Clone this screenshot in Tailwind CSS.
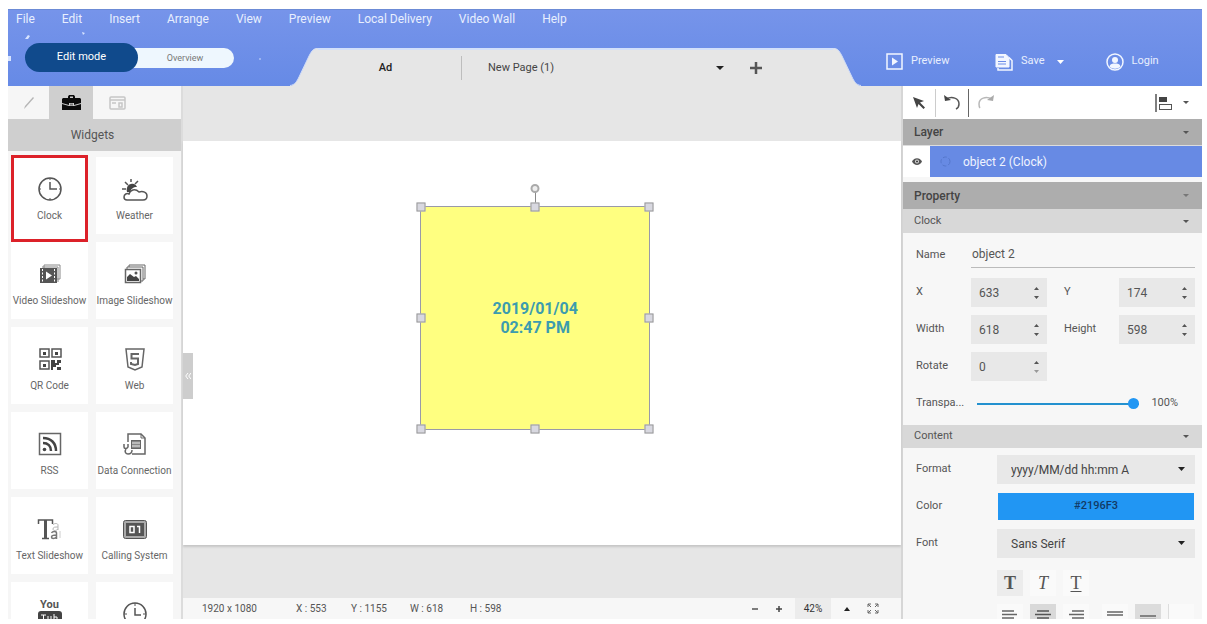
<!DOCTYPE html>
<html lang="en">
  <head>
    <meta charset="UTF-8" />
    <meta name="viewport" content="width=device-width, initial-scale=1.0" />
    <title>Signage Editor</title>
    <script src="https://cdn.jsdelivr.net/npm/@tailwindcss/browser@4"></script>
  </head>
  <body class="bg-white font-[Roboto,sans-serif] text-xs text-[#555]">
    <div class="flex h-screen flex-col overflow-hidden pt-[9px] pr-[5px] pb-[5px] pl-2">
      <!-- Header -->
      <header class="relative flex h-[77px] shrink-0 flex-col border-t border-[#6c8bd6] bg-linear-to-b from-[#7694ea] to-[#668ae6] text-[#e8effe]">
        <svg class="absolute top-0 left-0" width="260" height="76" fill="#d7e4ff">
          <path d="M17 29l3-4 2 1-2 3zM74 22l3 1-2 2zM0 46h3v5H0z" />
          <circle cx="252" cy="49" r="1" opacity=".6" />
        </svg>
        <nav class="flex h-8 gap-[27px] pl-2 leading-[18px]">
          <a href="#">File</a>
          <a href="#">Edit</a>
          <a href="#">Insert</a>
          <a href="#">Arrange</a>
          <a href="#">View</a>
          <a href="#">Preview</a>
          <a href="#">Local Delivery</a>
          <a href="#">Video Wall</a>
          <a href="#">Help</a>
        </nav>
        <div class="flex flex-1 items-end">
          <div class="flex w-[282px] shrink-0 items-center self-start pt-px pl-[17px]">
            <button class="z-10 h-[29px] w-[113px] rounded-full bg-[#104a8c] text-[11px] text-white">Edit mode</button>
            <button class="-ml-3 h-5 w-[108px] rounded-r-full bg-[#eef7fe] pl-2.5 text-[9px] text-[#777]">Overview</button>
          </div>
          <svg class="shrink-0" width="28" height="38" viewBox="0 0 28 38">
            <path d="M0 38C5 37 7 33 9 29L19 8C22 2 24 0 28 0V38z" fill="#e6e6e6" />
            <path d="M0 37.500C5 37 7 33 9 29L19 8C22 2 24 .5 28 .5" fill="none" stroke="#cfdcf8" />
          </svg>
          <div class="flex h-[38px] flex-1 items-center border-t-2 border-[#d3e0fa] bg-[#e6e6e6] text-[11px] text-[#444]">
            <button class="w-[143px] pr-2 font-medium text-[#222]">Ad</button>
            <span class="h-6 w-px bg-[#bdbdbd]"></span>
            <button class="flex-1 pl-[26px] text-left">New Page (1)</button>
            <button class="px-3" aria-label="Page list">
              <svg width="8" height="4"><path d="M0 0h8L4 4z" fill="#222" /></svg>
            </button>
            <button class="mr-[71px] ml-3.5" aria-label="Add page">
              <svg width="12" height="12" stroke="#555" stroke-width="2.500"><path d="M6 0v12M0 6h12" /></svg>
            </button>
          </div>
          <svg class="shrink-0" width="28" height="38" viewBox="0 0 28 38">
            <path d="M28 38C23 37 21 33 19 29L9 8C6 2 4 0 0 0V38z" fill="#e6e6e6" />
            <path d="M28 37.500C23 37 21 33 19 29L9 8C6 2 4 .5 0 .5" fill="none" stroke="#cfdcf8" />
          </svg>
          <div class="flex w-[341px] shrink-0 items-center self-stretch pb-[5px] pl-[25px] text-[11px]">
            <button class="flex w-[109px] items-center gap-2">
              <svg width="17" height="17" viewBox="0 0 17 17" fill="none" stroke="#f2f6ff" stroke-width="1.500">
                <rect x="1" y="1" width="15" height="15" />
                <path d="M6 4.500l6 4-6 4z" fill="#f2f6ff" stroke="none" />
              </svg>
              Preview
            </button>
            <button class="flex items-center gap-2">
              <svg width="18" height="18" viewBox="0 0 18 18" fill="none" stroke="#f2f6ff">
                <path d="M1 1.500h10l3 3V14H1z" fill="#f2f6ff" />
                <path d="M3 4h6M3 8.500h8M3 11h8" stroke="#6b8ce7" />
                <path d="M14 4.500l3 3V17H3v-2" stroke-width="1.500" />
              </svg>
              Save
            </button>
            <button class="ml-3" aria-label="Save options">
              <svg width="7" height="4"><path d="M0 0h7L3.500 4z" fill="#fff" /></svg>
            </button>
            <button class="ml-[42px] flex items-center gap-2">
              <svg width="18" height="18" viewBox="0 0 18 18" fill="none" stroke="#f2f6ff" stroke-width="1.500">
                <circle cx="9" cy="9" r="8" />
                <circle cx="9" cy="7" r="3" fill="#f2f6ff" stroke="none" />
                <path d="M3.500 13.500c1-3 3-3 5.500-3s4.500 0 5.500 3c-3 3-8 3-11 0z" fill="#f2f6ff" stroke="none" />
              </svg>
              Login
            </button>
          </div>
        </div>
      </header>

      <div class="flex min-h-0 flex-1">
        <!-- Widgets -->
        <aside class="flex w-[175px] shrink-0 flex-col border-r-2 border-[#dcdcdc] bg-[#f6f6f6]">
          <div class="flex h-[33px] shrink-0">
            <button class="flex w-[41px] items-center justify-center" aria-label="Draw">
              <svg width="14" height="16" viewBox="0 0 14 16"><path d="M2 14l1-3 8-9 1 1-8 9z" fill="#b5b5b5" /></svg>
            </button>
            <button class="flex w-11 items-center justify-center bg-[#cfcfcf]" aria-label="Widgets">
              <svg width="19" height="15" viewBox="0 0 19 15" fill="#0b0b0b">
                <path d="M6 3V1.500L7 0h5l1 1.500V3h5l1 1v4l-7 2V8H7v2L0 8V4l1-1zM8 3h3V1.500H8zM0 9l7 2h5l7-2v6H0z" />
                <path d="M8 8.500h3v2H8z" fill="#777" />
              </svg>
            </button>
            <button class="flex w-[49px] items-center justify-center" aria-label="Templates">
              <svg width="17" height="14" viewBox="0 0 17 14" fill="none" stroke="#c6c6c6" stroke-width="1.500">
                <rect x="1" y="1" width="15" height="12" rx="1" />
                <path d="M1 4h15M10 7h3v4h-3zM3 7h4" />
              </svg>
            </button>
          </div>
          <h2 class="h-8 shrink-0 bg-[#cfcfcf] pr-1 text-center leading-8">Widgets</h2>
          <div class="grid min-h-0 flex-1 auto-rows-[77px] grid-cols-[77px_77px] gap-2 overflow-hidden pt-1.5 pl-[3px] text-[10px] text-[#666]">
            <button class="-mt-0.5 -mb-2 flex flex-col items-center border-[3px] border-[#dc2129] bg-white pt-[19px]">
              <svg class="mb-2" width="24" height="24" viewBox="0 0 24 24" fill="none" stroke="#555" stroke-width="1.500">
                <circle cx="12" cy="12" r="11" />
                <path d="M12 5v7h7" />
                <path d="M12 1v2M12 21v2M1 12h2M21 12h2" stroke-width="1" />
              </svg>
              Clock
            </button>
            <button class="flex flex-col items-center bg-white pt-5 whitespace-nowrap">
              <svg class="mb-2" width="26" height="24" viewBox="0 0 26 24" fill="none" stroke="#555" stroke-width="1.500">
                <path d="M5 23c-2 0-3-1-3-3 0-3 3-4 5-3 1-4 6-6 10-2 4-1 8 0 8 4 0 3-2 4-4 4z" />
                <path d="M5 15c-1-4 1-8 4-8 3-1 5 1 6 3-4 0-6 2-7 5z" fill="#444" stroke="none" />
                <path d="M9 2v3M3 5l3 3M16 4l-3 3M0 12h4" />
              </svg>
              Weather
            </button>
            <button class="flex flex-col items-center bg-white pt-5 whitespace-nowrap">
              <svg class="mb-2" width="24" height="24" viewBox="0 0 24 24" fill="none" stroke="#666">
                <path d="M6 6V3h16v14h-3" stroke="#888" />
                <path d="M4 5h16v15" stroke="#888" />
                <rect x="2" y="6" width="17" height="15" fill="#555" stroke="none" />
                <path d="M4.500 7v14M16.500 7v14" stroke="#fff" stroke-dasharray="2 1.500" />
                <path d="M8 9.500l6 4-6 4z" fill="#fff" stroke="none" />
              </svg>
              Video Slideshow
            </button>
            <button class="flex flex-col items-center bg-white pt-5 whitespace-nowrap">
              <svg class="mb-2" width="24" height="24" viewBox="0 0 24 24" fill="none" stroke="#666">
                <path d="M6 5V3h16v14h-2M4 7V5h16v14h-2" />
                <rect x="2.500" y="7.500" width="15" height="13" stroke-width="1.500" fill="#fff" />
                <path d="M4 19v-4l3-3 4 3 2-1 3 3v2z" fill="#444" stroke="none" />
                <circle cx="13" cy="11" r="1.500" fill="#555" stroke="none" />
              </svg>
              Image Slideshow
            </button>
            <button class="flex flex-col items-center bg-white pt-5 whitespace-nowrap">
              <svg class="mb-2" width="24" height="24" viewBox="0 0 24 24" fill="none" stroke="#555" stroke-width="1.500">
                <path d="M2 2h9v8H2zM14 2h9v8h-9zM2 14h9v8H2z" />
                <path d="M5 5h3v3H5zM17 5h3v3h-3zM5 17h3v3H5zM13 13h4v3h2v-3h4v3h-2v2h-3v2h-3v3h-2zM19 20h4v3h-4z" fill="#444" stroke="none" />
              </svg>
              QR Code
            </button>
            <button class="flex flex-col items-center bg-white pt-5 whitespace-nowrap">
              <svg class="mb-2" width="22" height="24" viewBox="0 0 22 24" fill="none" stroke="#666">
                <path d="M2 2h18l-2 18-7 3-7-3z" stroke-width="1.500" />
                <path d="M15 7H7.500v4.500H14V17l-3 1-4-1v-2" stroke-width="2" />
              </svg>
              Web
            </button>
            <button class="flex flex-col items-center bg-white pt-5 whitespace-nowrap">
              <svg class="mb-2" width="24" height="24" viewBox="0 0 24 24" fill="none" stroke="#666" stroke-width="1.500">
                <rect x="1.500" y="1.500" width="21" height="21" />
                <path d="M5 6c8 0 13 5 13 13M5 11c5 0 8 3 8 8" stroke="#444" stroke-width="2.500" />
                <circle cx="6.500" cy="17.500" r="1.800" fill="#444" stroke="none" />
              </svg>
              RSS
            </button>
            <button class="flex flex-col items-center bg-white pt-5 whitespace-nowrap">
              <svg class="mb-2" width="24" height="24" viewBox="0 0 24 24" fill="none" stroke="#666">
                <path d="M5 10V2h13l4 4v16H9" stroke-width="1.500" />
                <path d="M18 2v4h4" />
                <rect x="8.500" y="8.500" width="9" height="8" fill="#888" />
                <path d="M9 11h8M9 14h8" stroke="#eee" />
                <path d="M1 12v3c0 2 3 2 4 0v-3M3 17c-2 3 0 5 2 5s4-1 4-4" stroke-width="1.500" />
              </svg>
              Data Connection
            </button>
            <button class="flex flex-col items-center bg-white pt-5 whitespace-nowrap">
              <!-- serif T with two fading letters stacked beside it -->
              <svg class="mb-2" width="26" height="24" viewBox="0 0 26 24" fill="none" stroke="#555">
                <path d="M1.500 7V3h14v4M5 21.500h7" stroke-width="1.500" />
                <path d="M8.500 3v18" stroke-width="3" />
                <path d="M16 8c1-2 5-2 5 0v5M21 10c-3 0-5 0-5 2s3 2 5 0" stroke="#b5b5b5" />
                <path d="M14.500 16c1-2 5-2 5 0v6M19.500 18c-3 0-5 0-5 2s3 2 5 0" stroke="#777" stroke-width="1.500" />
                <path d="M23 14v7" stroke="#ccc" />
              </svg>
              Text Slideshow
            </button>
            <button class="flex flex-col items-center bg-white pt-5 whitespace-nowrap">
              <svg class="mb-2" width="24" height="24" viewBox="0 0 24 24" fill="none" stroke="#555">
                <rect x=".5" y="3.500" width="23" height="18" rx="2" fill="#aaa" />
                <rect x="3.500" y="6.500" width="17" height="12" fill="#555" />
                <path d="M7 9.500h4v6H7zM14 9.500h2.500V16" stroke="#fff" stroke-width="1.500" />
              </svg>
              Calling System
            </button>
            <button class="flex flex-col items-center bg-white pt-[17px] whitespace-nowrap" aria-label="YouTube">
              <span class="h-3 text-[11px] leading-3 font-bold text-[#555]">You</span>
              <svg width="24" height="16" viewBox="0 0 24 16">
                <rect width="24" height="16" rx="3" fill="#444" />
                <path d="M3 4h5M5.500 4v9M10 5v8h3V5M16 3v10h3V6h-3" stroke="#fff" fill="none" />
              </svg>
            </button>
            <button class="flex flex-col items-center bg-white pt-5" aria-label="Countdown">
              <svg width="24" height="24" viewBox="0 0 24 24" fill="none" stroke="#555" stroke-width="1.500">
                <path d="M5 20.500a11 11 0 1 1 14 0" />
                <path d="M12 6v7h6" />
                <path d="M12 1v3M1 12h3M20 12h3" stroke-width="1" />
              </svg>
            </button>
          </div>
        </aside>

        <!-- Canvas -->
        <main class="relative flex min-w-0 flex-1 flex-col bg-[#e6e6e6] pt-[55px]">
          <div class="relative aspect-video w-full bg-white shadow-[0_2px_2px_#c6c6c6]">
            <div class="absolute top-[16.1%] left-[33%] flex h-[55.4%] w-[32.1%] items-center justify-center border border-[#9a9aa8] bg-[#ffff80] text-center text-base leading-[19px] font-bold text-[#3c9cae]">
              <p>2019/01/04<br />02:47 PM</p>
              <span class="absolute -top-[18px] left-1/2 h-4 w-px bg-[#888]"></span>
              <span class="absolute -top-[23px] left-1/2 size-[9px] -translate-x-1/2 rounded-full border-2 border-[#aaa] bg-[#eee]"></span>
              <span class="absolute top-0 left-0 size-[9px] -translate-1/2 border border-[#999] bg-[#d8d8e0]"></span>
              <span class="absolute top-0 left-1/2 size-[9px] -translate-1/2 border border-[#999] bg-[#d8d8e0]"></span>
              <span class="absolute top-0 left-full size-[9px] -translate-1/2 border border-[#999] bg-[#d8d8e0]"></span>
              <span class="absolute top-1/2 left-0 size-[9px] -translate-1/2 border border-[#999] bg-[#d8d8e0]"></span>
              <span class="absolute top-1/2 left-full size-[9px] -translate-1/2 border border-[#999] bg-[#d8d8e0]"></span>
              <span class="absolute top-full left-0 size-[9px] -translate-1/2 border border-[#999] bg-[#d8d8e0]"></span>
              <span class="absolute top-full left-1/2 size-[9px] -translate-1/2 border border-[#999] bg-[#d8d8e0]"></span>
              <span class="absolute top-full left-full size-[9px] -translate-1/2 border border-[#999] bg-[#d8d8e0]"></span>
            </div>
          </div>
          <button class="absolute top-1/2 left-0 flex h-[46px] w-2.5 items-center justify-center bg-[#cdcdcd]" aria-label="Collapse panel">
            <svg width="6" height="6" fill="none" stroke="#fff"><path d="M3 0L.7 3 3 6M6 0L3.700 3 6 6" /></svg>
          </button>
          <footer class="mt-auto flex h-[21px] items-center bg-[#f7f7f7] pl-[19px] text-[10px]">
            <span class="w-[94px]">1920 x 1080</span>
            <span class="w-[55px]">X : 553</span>
            <span class="w-[59px]">Y : 1155</span>
            <span class="w-[60px]">W : 618</span>
            <span>H : 598</span>
            <div class="ml-auto flex items-center self-stretch pr-[22px]">
              <button class="w-6" aria-label="Zoom out">
                <svg class="mx-auto" width="6" height="6"><path d="M0 3h6" stroke="#555" stroke-width="1.500" /></svg>
              </button>
              <button class="w-6" aria-label="Zoom in">
                <svg class="mx-auto" width="6" height="6"><path d="M0 3h6M3 0v6" stroke="#444" stroke-width="1.500" /></svg>
              </button>
              <button class="ml-1 w-9 self-stretch bg-[#ececec] text-[#333]">42%</button>
              <button class="w-8" aria-label="Zoom levels">
                <svg class="mx-auto" width="6" height="4"><path d="M0 4h6L3 0z" fill="#222" /></svg>
              </button>
              <button class="ml-1" aria-label="Fit to screen">
                <svg width="12" height="11" viewBox="0 0 12 11" fill="none" stroke="#666">
                  <path d="M1 4V1h3M8 1h3v3M11 7v3H8M4 10H1V7M1 1l3 3M11 1L8 4M11 10L8 7M1 10l3-3" />
                </svg>
              </button>
            </div>
          </footer>
        </main>

        <!-- Properties -->
        <aside class="flex w-[301px] shrink-0 flex-col overflow-hidden border-l-2 border-[#d6d6d6] bg-[#f7f7f7]">
          <div class="flex h-[33px] shrink-0 items-center bg-white">
            <button class="flex w-8 justify-center" aria-label="Select">
              <svg width="14" height="14" viewBox="0 0 14 14"><path d="M1 1l11 4-4 1.500 5 5-1.500 1.500-5-5L5 12z" fill="#444" /></svg>
            </button>
            <span class="h-7 w-px bg-[#ccc]"></span>
            <button class="flex w-8 justify-center" aria-label="Undo">
              <svg width="17" height="15" viewBox="0 0 17 15" fill="none" stroke="#555" stroke-width="1.500">
                <path d="M2 4c6-3 13-1 13 5 0 2-1 4-3 5" />
                <path d="M0 0l1 6 6-1z" fill="#444" stroke="none" />
              </svg>
            </button>
            <span class="h-7 w-px bg-[#666]"></span>
            <button class="flex w-8 justify-center" aria-label="Redo">
              <svg width="17" height="15" viewBox="0 0 17 15" fill="none" stroke="#b8b8b8" stroke-width="1.500">
                <path d="M15 4C9 1 2 3 2 9c0 2 0 3 1 4" />
                <path d="M17 0l-1 6-6-1z" fill="#aaa" stroke="none" />
              </svg>
            </button>
            <button class="ml-auto" aria-label="Align">
              <svg width="17" height="18" viewBox="0 0 17 18" fill="none" stroke="#555">
                <path d="M1 0v18" stroke-width="1.500" />
                <rect x="4" y="3" width="8" height="5" fill="#444" stroke="none" />
                <rect x="4.500" y="10.500" width="12" height="5" />
              </svg>
            </button>
            <button class="mr-[13px] ml-[11px]" aria-label="Align options">
              <svg width="6" height="3"><path d="M0 0h6L3 3z" fill="#555" /></svg>
            </button>
          </div>
          <button class="flex h-[26px] shrink-0 items-center justify-between bg-[#adadad] pr-[13px] pl-[11px] font-medium text-[#444]">
            Layer
            <svg width="6" height="3"><path d="M0 0h6L3 3z" fill="#555" /></svg>
          </button>
          <div class="flex h-8 shrink-0 items-stretch border-t border-[#ddd] bg-white">
            <button class="flex w-[27px] items-center justify-center" aria-label="Toggle visibility">
              <svg width="10" height="7" viewBox="0 0 10 7"><path d="M0 3.500C2-1 8-1 10 3.500 8 8 2 8 0 3.500z" fill="#555" /><circle cx="5" cy="3.500" r="2" fill="#ddd" /><circle cx="5" cy="3.500" r="1" fill="#333" /></svg>
            </button>
            <button class="flex flex-1 items-center gap-3 bg-[#678ae4] pl-2.5 text-[#f0f4ff]">
              <svg width="11" height="11" fill="none" stroke="#5577cc"><circle cx="5.500" cy="5.500" r="4.500" stroke-dasharray="4 2" /></svg>
              object 2 (Clock)
            </button>
          </div>
          <button class="mt-[5px] flex h-[27px] shrink-0 items-center justify-between bg-[#adadad] pr-[13px] pl-[11px] font-medium text-[#444]">
            Property
            <svg width="6" height="3"><path d="M0 0h6L3 3z" fill="#777" /></svg>
          </button>
          <button class="flex h-6 shrink-0 items-center justify-between bg-[#d8d8d8] pr-[13px] pl-[11px] text-[11px]">
            Clock
            <svg width="6" height="3"><path d="M0 0h6L3 3z" fill="#555" /></svg>
          </button>

          <div class="grid shrink-0 auto-rows-[29px] grid-cols-[55px_76px_1fr_76px] items-center gap-y-2 pt-2 pr-[7px] pb-[7px] pl-[13px] text-[11px]">
            <label for="name">Name</label>
            <input id="name" class="col-span-3 h-[27px] self-start border-b border-[#bbb] pl-px text-xs outline-none" value="object 2" />

            <label for="x">X</label>
            <div class="flex h-full items-center bg-[#e8e8e8] px-2">
              <input id="x" type="number" value="633" class="w-full min-w-0 [appearance:textfield] text-xs outline-none [&::-webkit-inner-spin-button]:appearance-none" />
              <svg class="shrink-0" width="5" height="12" fill="#555"><path d="M0 3h5L2.500 0zM0 9h5L2.500 12z" /></svg>
            </div>
            <label for="y" class="pl-[17px]">Y</label>
            <div class="flex h-full items-center bg-[#e8e8e8] px-2">
              <input id="y" type="number" value="174" class="w-full min-w-0 [appearance:textfield] text-xs outline-none [&::-webkit-inner-spin-button]:appearance-none" />
              <svg class="shrink-0" width="5" height="12" fill="#555"><path d="M0 3h5L2.500 0zM0 9h5L2.500 12z" /></svg>
            </div>

            <label for="width">Width</label>
            <div class="flex h-full items-center bg-[#e8e8e8] px-2">
              <input id="width" type="number" value="618" class="w-full min-w-0 [appearance:textfield] text-xs outline-none [&::-webkit-inner-spin-button]:appearance-none" />
              <svg class="shrink-0" width="5" height="12" fill="#555"><path d="M0 3h5L2.500 0zM0 9h5L2.500 12z" /></svg>
            </div>
            <label for="height" class="pl-[17px]">Height</label>
            <div class="flex h-full items-center bg-[#e8e8e8] px-2">
              <input id="height" type="number" value="598" class="w-full min-w-0 [appearance:textfield] text-xs outline-none [&::-webkit-inner-spin-button]:appearance-none" />
              <svg class="shrink-0" width="5" height="12" fill="#555"><path d="M0 3h5L2.500 0zM0 9h5L2.500 12z" /></svg>
            </div>

            <label for="rotate">Rotate</label>
            <div class="flex h-full items-center bg-[#e8e8e8] px-2">
              <input id="rotate" type="number" value="0" class="w-full min-w-0 [appearance:textfield] text-xs outline-none [&::-webkit-inner-spin-button]:appearance-none" />
              <svg class="shrink-0" width="5" height="12" fill="#555"><path d="M0 3h5L2.500 0z" /><path d="M0 9h5L2.500 12z" fill="#999" /></svg>
            </div>

            <label for="transparency" class="col-start-1">Transpa...</label>
            <div class="col-span-3 flex items-center gap-3 pr-[17px] pl-1.5">
              <input
                id="transparency"
                type="range"
                value="100"
                class="h-0.5 min-w-0 flex-1 appearance-none bg-[#2391cf] [&::-webkit-slider-thumb]:size-[11px] [&::-webkit-slider-thumb]:appearance-none [&::-webkit-slider-thumb]:rounded-full [&::-webkit-slider-thumb]:bg-[#2196f3]"
              />
              <span>100%</span>
            </div>
          </div>

          <button class="flex h-[23px] shrink-0 items-center justify-between bg-[#d8d8d8] pr-[13px] pl-[11px] text-[11px]">
            Content
            <svg width="6" height="3"><path d="M0 0h6L3 3z" fill="#555" /></svg>
          </button>

          <div class="grid shrink-0 grid-cols-[81px_1fr] items-center gap-y-2 pt-[7px] pr-[7px] pl-[13px] text-[11px]">
            <label for="format">Format</label>
            <div class="relative">
              <select id="format" class="h-[29px] w-full appearance-none bg-[#e8e8e8] pl-3.5 text-xs text-[#444]">
                <option>yyyy/MM/dd hh:mm A</option>
              </select>
              <svg class="pointer-events-none absolute top-3 right-2.5" width="7" height="4"><path d="M0 0h7L3.500 4z" fill="#222" /></svg>
            </div>
            <label for="color">Color</label>
            <button id="color" class="mx-px my-px h-[27px] bg-[#2196f3] font-medium text-[#123a66]">#2196F3</button>
            <label for="font">Font</label>
            <div class="relative">
              <select id="font" class="h-[29px] w-full appearance-none bg-[#e8e8e8] pl-3.5 text-xs text-[#444]">
                <option>Sans Serif</option>
              </select>
              <svg class="pointer-events-none absolute top-3 right-2.5" width="7" height="4"><path d="M0 0h7L3.500 4z" fill="#222" /></svg>
            </div>
            <div class="col-start-2 mt-1 flex gap-[7px] font-['Liberation_Serif',serif] text-lg leading-6 text-[#555]">
              <button class="h-[26px] w-[26px] bg-[#ececec] font-bold" aria-label="Bold">T</button>
              <button class="h-[26px] w-[26px] bg-[#fafafa] italic" aria-label="Italic">T</button>
              <button class="h-[26px] w-[26px] bg-[#fafafa] underline underline-offset-2" aria-label="Underline">T</button>
            </div>
            <div class="col-start-2 flex gap-[7px]">
              <button class="flex h-[26px] w-[26px] justify-center bg-[#fafafa] pt-1.5" aria-label="Align left">
                <svg width="16" height="16" stroke="#666" stroke-width="1.500"><path d="M0 1h12M0 4.500h15M0 8h12M0 11.500h15" /></svg>
              </button>
              <button class="flex h-[26px] w-[26px] justify-center bg-[#d9d9d9] pt-1.5" aria-label="Align center">
                <svg width="16" height="16" stroke="#555" stroke-width="1.500"><path d="M2 1h12M0 4.500h16M2 8h12M0 11.500h16" /></svg>
              </button>
              <button class="flex h-[26px] w-[26px] justify-center bg-[#fafafa] pt-1.5" aria-label="Align right">
                <svg width="16" height="16" stroke="#666" stroke-width="1.500"><path d="M4 1h12M1 4.500h15M4 8h12M1 11.500h15" /></svg>
              </button>
              <button class="ml-1.5 flex h-[26px] w-[26px] justify-center bg-[#fafafa] pt-1.5" aria-label="Align top">
                <svg width="16" height="16" stroke="#666" stroke-width="1.500"><path d="M0 2h16M0 5h16" /></svg>
              </button>
              <button class="flex h-[26px] w-[26px] justify-center bg-[#dcdcdc] pt-1.5" aria-label="Align middle">
                <svg width="16" height="16" stroke="#666" stroke-width="1.500"><path d="M0 6h16M0 9.500h16" /></svg>
              </button>
              <button class="h-[26px] w-[26px] border-l border-[#ddd] bg-[#fafafa]" aria-label="Align bottom"></button>
            </div>
          </div>
        </aside>
      </div>
    </div>
  </body>
</html>
